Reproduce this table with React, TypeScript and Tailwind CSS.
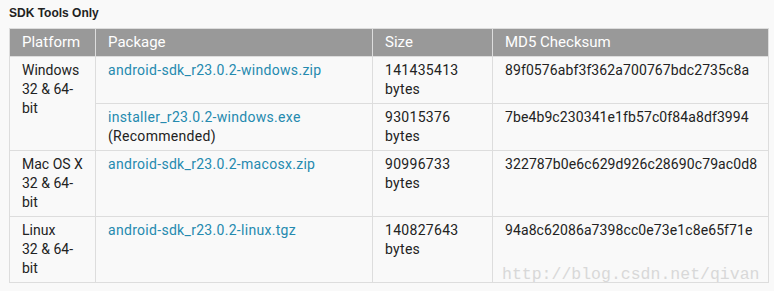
const rows = [
  {
    platform: ['Windows', '32 & 64-', 'bit'],
    span: 2,
    pkg: 'android-sdk_r23.0.2-windows.zip',
    note: '',
    size: '141435413',
    md5: '89f0576abf3f362a700767bdc2735c8a',
  },
  {
    platform: null,
    span: 1,
    pkg: 'installer_r23.0.2-windows.exe',
    note: '(Recommended)',
    size: '93015376',
    md5: '7be4b9c230341e1fb57c0f84a8df3994',
  },
  {
    platform: ['Mac OS X', '32 & 64-', 'bit'],
    span: 1,
    pkg: 'android-sdk_r23.0.2-macosx.zip',
    note: '',
    size: '90996733',
    md5: '322787b0e6c629d926c28690c79ac0d8',
  },
  {
    platform: ['Linux', '32 & 64-', 'bit'],
    span: 1,
    pkg: 'android-sdk_r23.0.2-linux.tgz',
    note: '',
    size: '140827643',
    md5: '94a8c62086a7398cc0e73e1c8e65f71e',
  },
];

export default function App() {
  return (
    <div className="relative w-[774px] h-[291px] bg-[#f9f9f9] font-['Roboto',sans-serif] text-[#222]">
      <div className="pl-[9px] pt-[4px] h-[28px] text-[12px] font-bold font-['Liberation_Sans',sans-serif]">
        SDK Tools Only
      </div>
      <table className="ml-[9px] w-[760px] table-fixed border-collapse text-[14px] leading-[19px] tracking-[0.3px]">
        <colgroup>
          <col className="w-[86px]" />
          <col className="w-[277px]" />
          <col className="w-[120px]" />
          <col />
        </colgroup>
        <thead>
          <tr className="bg-[#999] text-white text-[15px] tracking-normal">
            <th className="border border-[#ddd] px-[12px] py-[4px] text-left font-normal">Platform</th>
            <th className="border border-[#ddd] px-[12px] py-[4px] text-left font-normal">Package</th>
            <th className="border border-[#ddd] px-[12px] py-[4px] text-left font-normal">Size</th>
            <th className="border border-[#ddd] px-[12px] py-[4px] text-left font-normal">MD5 Checksum</th>
          </tr>
        </thead>
        <tbody>
          {rows.map((r) => (
            <tr key={r.pkg} className="align-top">
              {r.platform && (
                <td
                  rowSpan={r.span}
                  className="border border-[#ddd] pl-[12px] pr-0 py-[4px] whitespace-nowrap tracking-normal"
                >
                  {r.platform.map((l) => (
                    <div key={l}>{l}</div>
                  ))}
                </td>
              )}
              <td className="border border-[#ddd] px-[12px] py-[4px]">
                <div className="text-[#258aaf]">{r.pkg}</div>
                {r.note && <div>{r.note}</div>}
              </td>
              <td className="border border-[#ddd] px-[12px] py-[4px]">
                <div>{r.size}</div>
                <div>bytes</div>
              </td>
              <td className="border border-[#ddd] px-[12px] py-[4px] tracking-[0.1px]">{r.md5}</td>
            </tr>
          ))}
        </tbody>
      </table>
      <div className="absolute left-[502px] top-[263px] text-[16.5px] text-[#d8d8d8] font-['Liberation_Mono',monospace] pointer-events-none">
        http://blog.csdn.net/qivan
      </div>
    </div>
  );
}
